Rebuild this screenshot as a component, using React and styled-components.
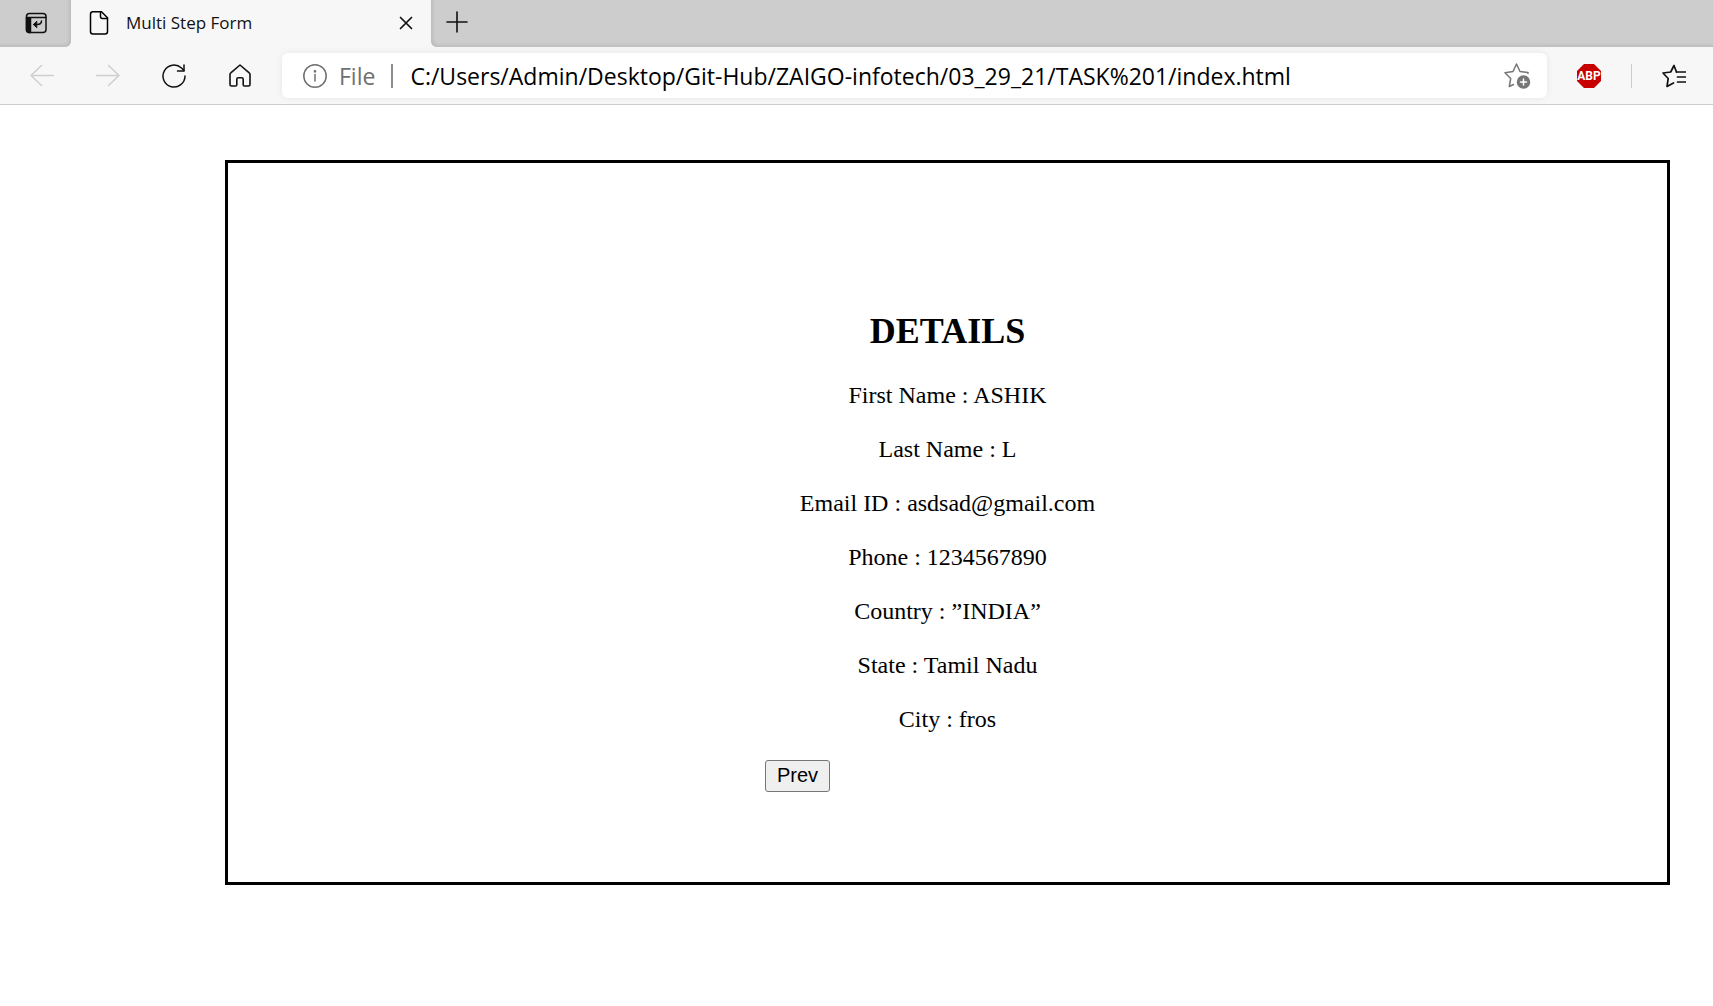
import React from "react";
import styled, { createGlobalStyle } from "styled-components";

const GlobalStyle = createGlobalStyle`
  * { box-sizing: border-box; }
  body { margin: 0; background: #fff; }
`;

const uiFont = `"Open Sans", "Noto Sans", sans-serif`;

const Page = styled.div`
  display: flex;
  flex-direction: column;
  min-height: 100vh;
`;

const TabStrip = styled.header`
  display: flex;
  height: 47px;
  background: #f7f7f7;
  font-family: ${uiFont};
`;

const StripStart = styled.div`
  display: flex;
  align-items: center;
  width: 71px;
  padding: 0 0 2px 24px;
  background: #cdcdcd;
  border-radius: 0 0 6px 0;
  box-shadow: inset -2px -2px 3px #bdbdbd;
`;

const StripEnd = styled.div`
  display: flex;
  flex: 1;
  align-items: center;
  padding: 0 0 4px 14px;
  background: #cdcdcd;
  border-radius: 0 0 0 6px;
  box-shadow: inset 2px -2px 3px #bdbdbd;
`;

const Tab = styled.div`
  display: flex;
  align-items: center;
  width: 360px;
  padding: 0 17px 2px 16px;
  gap: 15px;
`;

const TabTitle = styled.span`
  flex: 1;
  font-size: 17px;
  line-height: 24px;
  color: #111;
`;

const IconButton = styled.button`
  display: flex;
  flex: none;
  padding: 0;
  border: 0;
  background: none;
  color: ${(p) => p.$color || "#111"};
`;

const Toolbar = styled.nav`
  display: flex;
  align-items: center;
  height: 58px;
  padding: 0 27px 0 30px;
  gap: 30px;
  background: #f7f7f7;
  border-bottom: 1px solid #cecece;
  font-family: ${uiFont};
`;

const NavButtons = styled.div`
  display: flex;
  gap: 42px;
`;

const AddressBar = styled.div`
  display: flex;
  flex: 1;
  align-items: center;
  height: 45px;
  padding: 0 16px 0 21px;
  background: #fff;
  border-radius: 6px;
  box-shadow: 0 0 6px #e6e6e6;
  color: #6f6f6f;
`;

const Scheme = styled.label`
  margin-left: 12px;
  padding-right: 16px;
  font-size: 23px;
  line-height: 24px;
  border-right: 2px solid #8c8c8c;
`;

const Address = styled.input`
  flex: 1;
  min-width: 0;
  margin-left: 17px;
  padding: 0;
  border: 0;
  outline: 0;
  background: none;
  color: #000;
  font-family: ${uiFont};
  font-size: 23px;
  line-height: 32px;
`;

const Divider = styled.span`
  width: 1px;
  height: 24px;
  background: #cdcdcd;
`;

const Main = styled.main`
  padding: 55px 43px 55px 225px;
  font-family: "Liberation Serif", "Times New Roman", serif;
  color: #000;
`;

const Panel = styled.section`
  padding: 147px 24px 90px;
  border: 3px solid #000;
`;

const Details = styled.div`
  display: flex;
  flex-direction: column;
  gap: 24px;
  max-width: 365px;
  margin: 0 auto;
  text-align: center;
`;

const Heading = styled.h1`
  margin: 0 0 4px;
  font-size: 36px;
  line-height: 42px;
`;

const Detail = styled.p`
  margin: 0;
  font-size: 24px;
  line-height: 30px;
`;

const PrevButton = styled.button`
  align-self: flex-start;
  width: 65px;
  height: 32px;
  margin-top: 2px;
  padding: 0 0 2px;
  border: 1px solid #767676;
  border-radius: 3px;
  background: #efefef;
  color: #000;
  font-family: "Liberation Sans", Arial, sans-serif;
  font-size: 20px;
  line-height: 28px;
`;

const Icon = ({ size = 24, width = 1.5, children }) => (
  <svg
    width={size}
    height={size}
    viewBox={`0 0 ${size} ${size}`}
    fill="none"
    stroke="currentColor"
    strokeWidth={width}
    strokeLinecap="round"
    strokeLinejoin="round"
    aria-hidden="true"
  >
    {children}
  </svg>
);

const details = [
  ["First Name", "ASHIK"],
  ["Last Name", "L"],
  ["Email ID", "asdsad@gmail.com"],
  ["Phone", "1234567890"],
  ["Country", "”INDIA”"],
  ["State", "Tamil Nadu"],
  ["City", "fros"],
];

export default function App() {
  return (
    <Page>
      <GlobalStyle />
      <TabStrip>
        <StripStart>
          <IconButton aria-label="Tab actions">
            <Icon>
              <rect x="2.5" y="2.5" width="19.5" height="19" rx="3" />
              <path d="M2.5 6.500h19.500" />
              <path d="M2.5 7h4v14.500h-1.500a2.500 2.500 0 0 1-2.500-2.500z" fill="currentColor" />
              <path d="M17.500 10c0 2.500-1.500 3.500-4.500 3.500H10" />
              <path d="M12.500 10.500l-3 3 3 3z" fill="currentColor" strokeWidth="1" />
            </Icon>
          </IconButton>
        </StripStart>
        <Tab>
          <Icon>
            <path d="M6 .8h8.500l6 6V20.500a2.500 2.500 0 0 1-2.500 2.500H6a2.500 2.500 0 0 1-2.500-2.500V3.300A2.500 2.500 0 0 1 6 .8z" />
            <path d="M13.500 1v4.500a2 2 0 0 0 2 2h5" />
          </Icon>
          <TabTitle>Multi Step Form</TabTitle>
          <IconButton aria-label="Close tab">
            <Icon size={16} width={1.7}>
              <path d="M2.500 2.500l11 11M13.500 2.500l-11 11" />
            </Icon>
          </IconButton>
        </Tab>
        <StripEnd>
          <IconButton aria-label="New tab">
            <Icon width={1.6}>
              <path d="M2 12h20M12 2v20" />
            </Icon>
          </IconButton>
        </StripEnd>
      </TabStrip>

      <Toolbar>
        <NavButtons>
          <IconButton aria-label="Back" $color="#cfcfcf">
            <Icon>
              <path d="M23.500 11.500H1M11.500 1.500L1 11.500l10.500 10" />
            </Icon>
          </IconButton>
          <IconButton aria-label="Forward" $color="#cfcfcf">
            <Icon>
              <path d="M.5 11.500H23M12.500 1.500L23 11.500l-10.500 10" />
            </Icon>
          </IconButton>
          <IconButton aria-label="Refresh">
            <Icon width={1.5}>
              <path d="M23 12A11 11 0 1 1 19.500 4L22 6.500" />
              <path d="M22 1v6h-6.500" />
            </Icon>
          </IconButton>
          <IconButton aria-label="Home">
            <Icon width={1.6}>
              <path d="M12 1L2.800 8.800a2 2 0 0 0-.8 1.600V20.500A1.500 1.500 0 0 0 3.500 22H7.500A1.300 1.300 0 0 0 8.800 20.700v-5.500a1.500 1.500 0 0 1 1.500-1.500h3.400a1.500 1.500 0 0 1 1.500 1.500v5.500a1.300 1.300 0 0 0 1.300 1.300h4A1.500 1.500 0 0 0 22 20.500V10.400a2 2 0 0 0-.8-1.600z" />
            </Icon>
          </IconButton>
        </NavButtons>
        <AddressBar>
          <Icon>
            <circle cx="12" cy="12" r="11.200" />
            <path d="M12 10.500v6.500" />
            <circle cx="12" cy="7.300" r=".6" fill="currentColor" />
          </Icon>
          <Scheme htmlFor="address">File</Scheme>
          <Address
            id="address"
            type="text"
            spellCheck={false}
            defaultValue="C:/Users/Admin/Desktop/Git-Hub/ZAIGO-infotech/03_29_21/TASK%201/index.html"
          />
          <IconButton aria-label="Add to favorites" $color="#767676">
            <Icon size={28}>
              <path d="M25 11.500V10.500L17 9.500 13.500 2 10 9.500l-8 1.300 5.700 5.700-1.400 8L10.500 22.500" />
              <circle cx="20.500" cy="20" r="6" fill="currentColor" />
              <path d="M20.500 17v6M17.500 20h6" stroke="#fff" />
            </Icon>
          </IconButton>
        </AddressBar>
        <IconButton aria-label="Adblock Plus">
          <svg width="24" height="24" viewBox="0 0 24 24" aria-hidden="true">
            <path d="M7 0h10l7 7v10l-7 7H7l-7-7V7z" fill="#c70000" />
            <text
              x="12"
              y="16"
              fill="#fff"
              fontFamily="Roboto, sans-serif"
              fontSize="12"
              fontWeight="700"
              textAnchor="middle"
            >
              ABP
            </text>
          </svg>
        </IconButton>
        <Divider />
        <IconButton aria-label="Favorites">
          <Icon width={1.700}>
            <path d="M14.500 8L12 1.500 8.700 8 1 9l5.200 5.500L5 22.500l6.500-3.500" />
            <path d="M14.500 8H23.500M15.500 13h8M15.500 18h8" />
          </Icon>
        </IconButton>
      </Toolbar>

      <Main>
        <Panel>
          <Details>
            <Heading>DETAILS</Heading>
            {details.map(([label, value]) => (
              <Detail key={label}>
                {label} : {value}
              </Detail>
            ))}
            <PrevButton type="button">Prev</PrevButton>
          </Details>
        </Panel>
      </Main>
    </Page>
  );
}
